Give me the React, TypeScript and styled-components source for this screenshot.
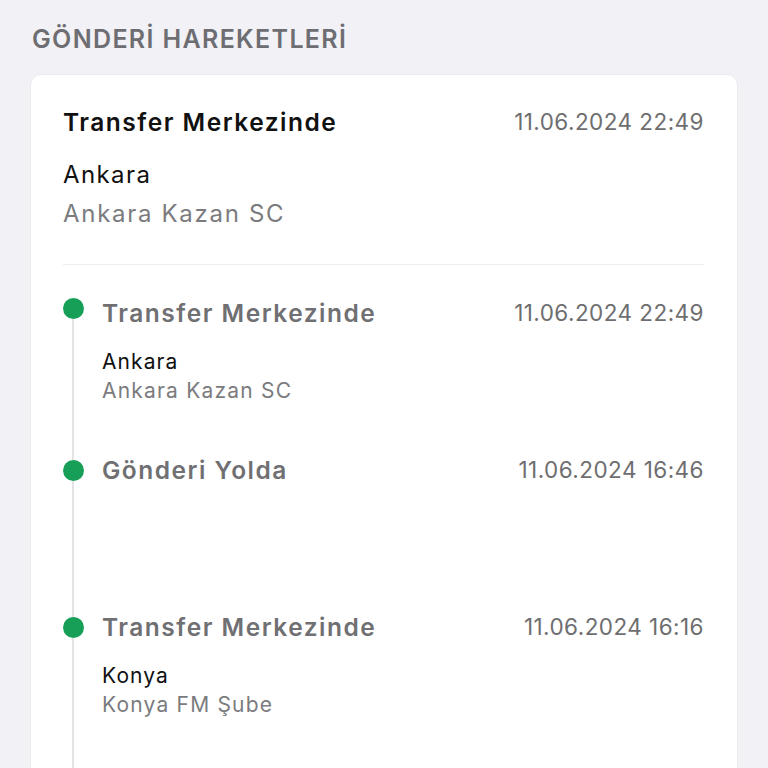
import React from 'react'
import styled,{createGlobalStyle} from 'styled-components'

interface IMovement{
    title:string;
    date:string;
    city?:string;
    branch?:string;
}

const MOVEMENTS:IMovement[]=[
    {title:'Transfer Merkezinde',date:'11.06.2024 22:49',city:'Ankara',branch:'Ankara Kazan SC'},
    {title:'Gönderi Yolda',date:'11.06.2024 16:46'},
    {title:'Transfer Merkezinde',date:'11.06.2024 16:16',city:'Konya',branch:'Konya FM Şube'},
]

const GlobalStyle=createGlobalStyle`
html,body{
margin:0;
padding:0;
background:#f2f2f6;
}
body{
font-family:Inter,"Noto Sans",sans-serif;
-webkit-font-smoothing:antialiased;
}
`

export default function App():React.ReactElement{
    const latest=MOVEMENTS[0]
    return (
        <>
            <GlobalStyle />
            <Page>
                <SectionTitle>GÖNDERİ HAREKETLERİ</SectionTitle>
                <Card>
                    <Summary>
                        <HeaderRow>
                            <SummaryTitle>{latest.title}</SummaryTitle>
                            <DateText>{latest.date}</DateText>
                        </HeaderRow>
                        <SummaryCity>{latest.city}</SummaryCity>
                        <SummaryBranch>{latest.branch}</SummaryBranch>
                    </Summary>
                    <Divider />
                    <Timeline>
                        {MOVEMENTS.map((movement,index)=>(
                            <TimelineItem key={index}>
                                <Rail>
                                    <Stub hidden={index===0} />
                                    <Dot />
                                    <RailLine />
                                </Rail>
                                <ItemBody>
                                    <HeaderRow>
                                        <ItemTitle>{movement.title}</ItemTitle>
                                        <DateText>{movement.date}</DateText>
                                    </HeaderRow>
                                    {movement.city&&(
                                        <ItemPlace>
                                            <ItemCity>{movement.city}</ItemCity>
                                            <ItemBranch>{movement.branch}</ItemBranch>
                                        </ItemPlace>
                                    )}
                                </ItemBody>
                            </TimelineItem>
                        ))}
                    </Timeline>
                </Card>
            </Page>
        </>
    )
}

const Page=styled.div`
padding:23px 31px 0;
`

const SectionTitle=styled.h2`
margin:0 0 20px 1px;
font-size:25px;
line-height:32px;
font-weight:600;
color:#6d6d72;
letter-spacing:1.35px;
`

const Card=styled.div`
background:#ffffff;
border-radius:10px;
padding:32px 33px 24px 32px;
box-shadow:0 0 0 1px #ececef;
`

const Summary=styled.div`
display:flex;
flex-direction:column;
`

const HeaderRow=styled.div`
display:flex;
justify-content:space-between;
align-items:center;
`

const SummaryTitle=styled.div`
font-size:24.5px;
line-height:30px;
font-weight:600;
color:#111111;
letter-spacing:1.5px;
`

const DateText=styled.div`
font-size:22.5px;
line-height:30px;
color:#6e6e70;
letter-spacing:0.45px;
`

const SummaryCity=styled.div`
margin-top:18px;
font-size:24px;
line-height:39px;
color:#111111;
letter-spacing:1.4px;
`

const SummaryBranch=styled.div`
font-size:24px;
line-height:39px;
color:#7b7b7e;
letter-spacing:1.7px;
`

const Divider=styled.div`
height:1px;
margin-top:31px;
background:#ededf0;
`

const Timeline=styled.div`
padding-top:33px;
`

const TimelineItem=styled.div`
display:grid;
grid-template-columns:20px 1fr;
column-gap:19px;
min-height:157px;
`

const Rail=styled.div`
display:flex;
flex-direction:column;
align-items:center;
`

const Stub=styled.div<{hidden:boolean}>`
width:2px;
height:5px;
background:${({hidden})=>hidden?'transparent':'#e3e3e6'};
`

const Dot=styled.div`
width:21px;
height:21px;
flex:none;
border-radius:50%;
background:#179f58;
`

const RailLine=styled.div`
flex:1;
width:2px;
background:#e3e3e6;
`

const ItemBody=styled.div`
display:flex;
flex-direction:column;
`

const ItemTitle=styled.div`
font-size:24.5px;
line-height:30px;
font-weight:600;
color:#707073;
letter-spacing:1.5px;
`

const ItemPlace=styled.div`
margin-top:19px;
display:flex;
flex-direction:column;
`

const ItemCity=styled.div`
font-size:21px;
line-height:29px;
color:#111111;
letter-spacing:1.1px;
`

const ItemBranch=styled.div`
font-size:21px;
line-height:29px;
color:#7b7b7e;
letter-spacing:1.2px;
`
